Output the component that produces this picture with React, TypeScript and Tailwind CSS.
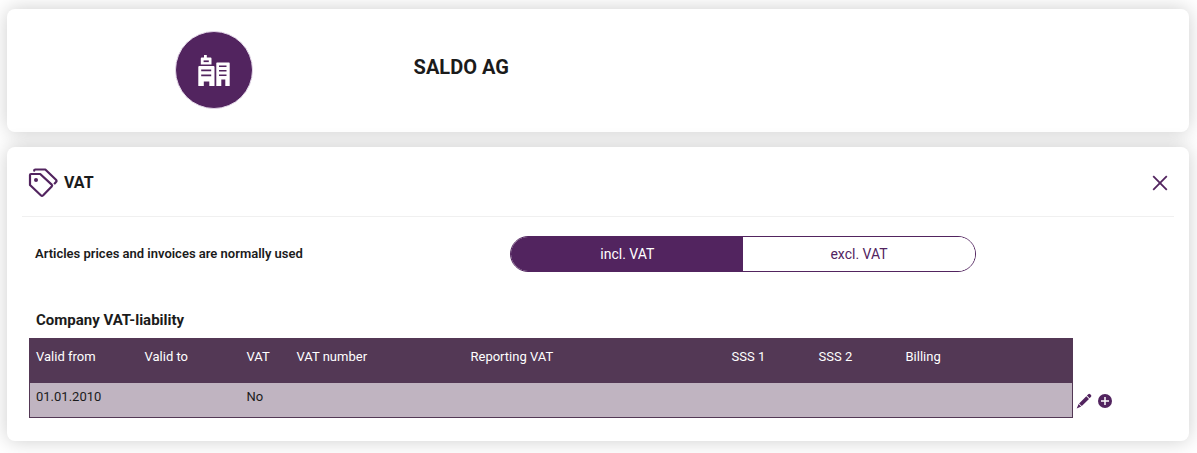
import { useState } from "react";

function BuildingsIcon() {
  return (
    <svg viewBox="0 0 32 31" className="h-[31px] w-8" aria-hidden="true">
      <path
        fill="#fff"
        d="M6 0h2.800v2.600h3.800c.5 0 .9.4.9.9v6H2.800v-6c0-.5.4-.9.9-.9H6z"
      />
      <path fill="#52245f" d="M5.600 5.400h5.200v1.700H5.600z" />
      <path
        fill="#fff"
        d="M1.200 11h14.400c.5 0 .9.4.9.9V31h-5.200v-4.600H5.800V31H.3V11.900c0-.5.4-.9.9-.9z"
      />
      <path fill="#52245f" d="M3.200 14.500h10v1.700h-10zM3.200 19.600h10v1.700h-10z" />
      <path
        fill="#fff"
        d="M19.300 7.500h11.400c.6 0 1 .4 1 1V31h-4.400v-6.600h-4V31h-5V8.500c0-.6.4-1 1-1z"
      />
      <path
        fill="#52245f"
        d="M21 10.500h7.500v1.600H21zM21 15h7.500v1.600H21zM21 19.500h7.500v1.600H21z"
      />
    </svg>
  );
}

function TagsIcon() {
  return (
    <svg
      viewBox="0 0 30 30"
      className="size-[30px]"
      fill="none"
      stroke="#52245f"
      strokeWidth="2.2"
      strokeLinejoin="round"
      strokeLinecap="round"
      aria-hidden="true"
    >
      <path d="M3 6H12.200L23.700 16.600Q24.600 17.500 23.700 18.500L15.200 27.300Q14 28.400 12.800 27.300L2 17V7Q2 6 3 6Z" />
      <path d="M6.200 2.700Q6.200 1.500 7.400 1.500H17.300L28 11.800Q29 13 28 14L26.700 15.400" />
      <circle cx="8" cy="12" r="2" fill="#52245f" stroke="none" />
    </svg>
  );
}

function CloseIcon() {
  return (
    <svg viewBox="0 0 16 16" className="size-4" fill="none" stroke="#52245f" strokeWidth="1.8" aria-hidden="true">
      <path d="M1.200 1.200 14.800 14.800M14.800 1.200 1.200 14.800" />
    </svg>
  );
}

function PencilIcon() {
  return (
    <svg viewBox="0 0 16 16" className="size-4" fill="#52245f" aria-hidden="true">
      <path d="M10.900 2.600 12.300 1.200Q13.300.4 14.200 1.200L15 2Q15.800 2.900 15 3.800L13.600 5.300ZM10.300 3.200 13 5.900 5.800 13.100 3.100 10.400ZM2.600 11 5.200 13.600.7 15.500Z" />
    </svg>
  );
}

function PlusCircleIcon() {
  return (
    <svg viewBox="0 0 14 14" className="size-[14px]" aria-hidden="true">
      <circle cx="7" cy="7" r="7" fill="#52245f" />
      <path d="M7 3v8M3 7h8" stroke="#fff" strokeWidth="1.5" />
    </svg>
  );
}

const columns = [
  { label: "Valid from", width: "w-[109px]" },
  { label: "Valid to", width: "w-[102px]" },
  { label: "VAT", width: "w-[50px]" },
  { label: "VAT number", width: "w-[174px]" },
  { label: "Reporting VAT", width: "w-[261px]" },
  { label: "SSS 1", width: "w-[87px]" },
  { label: "SSS 2", width: "w-[87px]" },
  { label: "Billing", width: "" },
];

const rows = [["01.01.2010", "", "No", "", "", "", "", ""]];

export default function App() {
  const [inclusive, setInclusive] = useState(true);
  const option = "flex flex-1 cursor-pointer items-center justify-center text-sm";
  const active = "bg-[#52245f] text-white";
  const idle = "bg-white text-[#52245f]";

  return (
    <div className="flex flex-col gap-[15px] overflow-hidden bg-white pt-[9px] pr-2 pb-3 pl-[7px] font-['Roboto',sans-serif] text-[#1b1b1b]">
      <header className="flex rounded-lg bg-white pt-[22px] pb-[23px] shadow-[0_0_20px_rgba(0,0,0,0.2)]">
        <div className="flex w-[34.4%] justify-center pl-[7px]">
          <div className="flex size-[78px] items-center justify-center rounded-full border border-[#e3d7e8] bg-[#52245f]">
            <BuildingsIcon />
          </div>
        </div>
        <h1 className="pt-[22px] text-xl leading-7 font-bold">SALDO AG</h1>
      </header>

      <main className="rounded-lg bg-white px-[15px] pb-[23px] shadow-[0_0_20px_rgba(0,0,0,0.2)]">
        <div className="flex h-[70px] items-center justify-between border-b border-[#f0f0f0] pt-[3px] pr-[6px] pl-[6px]">
          <h2 className="flex items-center gap-[6px] text-base font-bold">
            <TagsIcon />
            VAT
          </h2>
          <button type="button" aria-label="Close" className="cursor-pointer">
            <CloseIcon />
          </button>
        </div>

        <div className="flex items-center pt-[19px]">
          <p id="price-mode" className="w-[42.4%] pl-[13px] text-[13px] font-semibold">
            Articles prices and invoices are normally used
          </p>
          <div
            role="group"
            aria-labelledby="price-mode"
            className="flex h-9 w-[40.4%] overflow-hidden rounded-full border border-[#52245f]"
          >
            <button
              type="button"
              aria-pressed={inclusive}
              onClick={() => setInclusive(true)}
              className={`${option} ${inclusive ? active : idle}`}
            >
              incl. VAT
            </button>
            <button
              type="button"
              aria-pressed={!inclusive}
              onClick={() => setInclusive(false)}
              className={`${option} ${inclusive ? idle : active}`}
            >
              excl. VAT
            </button>
          </div>
        </div>

        <h3 id="liability" className="pt-[38px] pl-[14px] text-[15px] leading-5 font-bold">
          Company VAT-liability
        </h3>
        <div className="flex items-end pt-2 pl-[7px]">
          <table
            aria-labelledby="liability"
            className="w-[91.2%] table-fixed border-collapse border border-[#533855] text-[13px] leading-5"
          >
            <thead className="bg-[#533855] text-white">
              <tr className="h-11">
                {columns.map((c) => (
                  <th key={c.label} className={`${c.width} px-[6px] pt-2 text-left align-top font-normal`}>
                    {c.label}
                  </th>
                ))}
              </tr>
            </thead>
            <tbody className="bg-[#c0b4c1]">
              {rows.map((row) => (
                <tr key={row[0]} className="h-[35px]">
                  {row.map((cell, i) => (
                    <td key={columns[i].label} className="px-[6px] pt-1 align-top">
                      {cell}
                    </td>
                  ))}
                </tr>
              ))}
            </tbody>
          </table>
          <div className="flex items-center gap-[6px] pb-[9px] pl-[3px]">
            <button type="button" aria-label="Edit" className="cursor-pointer">
              <PencilIcon />
            </button>
            <button type="button" aria-label="Add" className="cursor-pointer">
              <PlusCircleIcon />
            </button>
          </div>
        </div>
      </main>
    </div>
  );
}
